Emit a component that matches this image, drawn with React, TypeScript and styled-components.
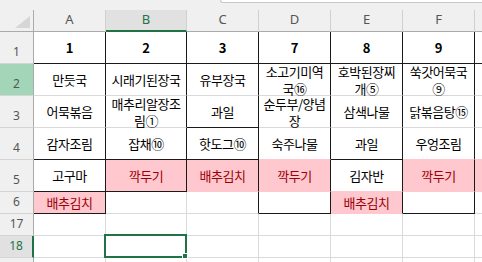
import React from "react";
import styled, { createGlobalStyle } from "styled-components";

const GREEN = "#217346";
const GRID = "#dadada";
const INK = "#1a1a1a";
const PINK_FILL = "#ffc7ce";
const PINK_TEXT = "#9c0006";

const GlobalStyle = createGlobalStyle`
  html, body {
    margin: 0;
    padding: 0;
    background: #f0f0f0;
    overflow: hidden;
  }
  body {
    font-family: "Noto Sans CJK KR", "Noto Sans", sans-serif;
  }
`;

const Window = styled.div`
  width: 482px;
  height: 262px;
  overflow: hidden;
  background: #f0f0f0;
`;

const TopStrip = styled.div`
  height: 10px;
  display: flex;
  align-items: flex-start;
`;

const FormulaEdge = styled.div`
  margin-left: 220px;
  flex: 1;
  height: 2px;
  background: #fff;
  border-left: 1px solid #c8c8c8;
  border-bottom: 1px solid #c8c8c8;
  border-bottom-left-radius: 4px;
`;

const Sheet = styled.div`
  display: grid;
  grid-template-columns: 34px 72px 81px 72px 72px 72px 72px 72px;
  grid-template-rows: 22px 32px 32px 32px 32px 32px 22px 22px 22px 22px;
  background: #fff;
`;

const Corner = styled.div`
  box-sizing: border-box;
  display: flex;
  align-items: flex-end;
  justify-content: flex-end;
  padding: 0 3px 3px 0;
  background: #f0f0f0;
  border-right: 1px solid #ababab;
  border-bottom: 1px solid #ababab;
`;

const CornerTriangle = styled.span`
  width: 15px;
  height: 12px;
  background: #d6d6d6;
  clip-path: polygon(100% 0, 100% 100%, 0 100%);
`;

const ColHead = styled.div<{ $selected?: boolean }>`
  box-sizing: border-box;
  display: flex;
  align-items: center;
  justify-content: center;
  padding-bottom: ${(p) => (p.$selected ? 3 : 4)}px;
  font-family: "Noto Sans", sans-serif;
  font-size: 13px;
  line-height: 18px;
  color: ${(p) => (p.$selected ? GREEN : "#555")};
  background: ${(p) => (p.$selected ? "#e1e1e1" : "#f0f0f0")};
  border-right: 1px solid #d0d0d0;
  border-bottom: ${(p) => (p.$selected ? `2px solid ${GREEN}` : "1px solid #ababab")};
`;

type HeadState = "plain" | "marked" | "selected";

const RowHead = styled.div<{ $state: HeadState }>`
  box-sizing: border-box;
  display: flex;
  align-items: flex-end;
  justify-content: center;
  padding-bottom: 3px;
  font-family: "Noto Sans", sans-serif;
  font-size: 12px;
  line-height: 16px;
  color: ${(p) => (p.$state === "selected" ? GREEN : "#555")};
  background: ${(p) =>
    p.$state === "marked" ? "#a3d6b8" : p.$state === "selected" ? "#e1e1e1" : "#f0f0f0"};
  border-right: ${(p) => (p.$state === "selected" ? `2px solid ${GREEN}` : "1px solid #ababab")};
  border-bottom: 1px solid #d4d4d4;
`;

type Edge = "grid" | "ink" | "fill";

const edgeColor = (e: Edge) => (e === "ink" ? INK : e === "fill" ? PINK_FILL : GRID);

const Cell = styled.div<{ $right: Edge; $bottom: Edge; $pink?: boolean; $bold?: boolean }>`
  position: relative;
  box-sizing: border-box;
  display: flex;
  align-items: center;
  justify-content: center;
  padding: 0 3px;
  text-align: center;
  word-break: break-all;
  font-size: 13px;
  letter-spacing: ${(p) => (p.$bold ? "0" : "-0.5px")};
  line-height: 17px;
  font-weight: ${(p) => (p.$bold ? 700 : 400)};
  color: ${(p) => (p.$pink ? PINK_TEXT : "#000")};
  background: ${(p) => (p.$pink ? PINK_FILL : "#fff")};
  border-right: 1px solid ${(p) => edgeColor(p.$right)};
  border-bottom: 1px solid ${(p) => edgeColor(p.$bottom)};
`;

const Selection = styled.div`
  position: absolute;
  top: -2px;
  left: -2px;
  right: -1px;
  bottom: -1px;
  border: 2px solid ${GREEN};
  pointer-events: none;
  z-index: 2;
`;

const FillHandle = styled.span`
  position: absolute;
  right: -3px;
  bottom: -3px;
  width: 4px;
  height: 4px;
  background: ${GREEN};
  border: 1px solid #fff;
`;

interface RowData {
  label: string;
  values: string[];
  bold?: boolean;
  state?: HeadState;
}

// column G only peeks in at the right edge, so its header and values stay blank
const COLS = ["A", "B", "C", "D", "E", "F", "G"];
const COL_LABELS = ["A", "B", "C", "D", "E", "F", ""];

const ROWS: RowData[] = [
  { label: "1", values: ["1", "2", "3", "7", "8", "9", ""], bold: true },
  {
    label: "2",
    state: "marked",
    values: ["만듯국", "시래기된장국", "유부장국", "소고기미역국⑯", "호박된장찌개⑤", "쑥갓어묵국⑨", ""],
  },
  { label: "3", values: ["어묵볶음", "매추리알장조림①", "과일", "순두부/양념장", "삼색나물", "닭볶음탕⑮", ""] },
  { label: "4", values: ["감자조림", "잡채⑩", "핫도그⑩", "숙주나물", "과일", "우엉조림", ""] },
  { label: "5", values: ["고구마", "깍두기", "배추김치", "깍두기", "김자반", "깍두기", ""] },
  { label: "6", values: ["배추김치", "", "", "", "배추김치", "", ""] },
  { label: "17", values: [] },
  { label: "18", values: [], state: "selected" },
  // last row is cut by the window bottom, its number is not visible
  { label: "", values: [] },
];

// "배추김치"/"깍두기" cells carry the light red highlight
const PINK = new Set(["B5", "C5", "D5", "F5", "G5", "A6", "E6"]);

// thick day-block outlines
const INK_RIGHT = new Set<string>();
for (let r = 1; r <= 6; r++) {
  ["A", "C", "D", "E", "F"].forEach((c) => INK_RIGHT.add(c + r));
  if (r <= 5) INK_RIGHT.add("B" + r);
}
const INK_BOTTOM = new Set([
  "A1", "B1", "C1", "D1", "E1", "F1", "G1",
  "C3",
  "A4", "B4", "C4", "E4",
  "A5", "B5",
  "A6", "D6", "F6",
]);

const SELECTED = "B18";

const pinkAt = (c: number, label: string) => c < COLS.length && PINK.has(COLS[c] + label);

const App: React.FC = () => {
  return (
    <>
      <GlobalStyle />
      <Window>
        <TopStrip>
          <FormulaEdge />
        </TopStrip>
        <Sheet>
          <Corner>
            <CornerTriangle />
          </Corner>
          {COLS.map((c, ci) => (
            <ColHead key={c} $selected={c === "B"}>
              {COL_LABELS[ci]}
            </ColHead>
          ))}

          {ROWS.map((row, ri) => {
            const below = ROWS[ri + 1]?.label ?? "";
            return (
              <React.Fragment key={ri}>
                <RowHead $state={row.state ?? "plain"}>{row.label}</RowHead>
                {COLS.map((c, ci) => {
                  const id = c + row.label;
                  const self = row.label !== "" && PINK.has(id);
                  const right: Edge = INK_RIGHT.has(id)
                    ? "ink"
                    : self || (row.label !== "" && pinkAt(ci + 1, row.label))
                    ? "fill"
                    : "grid";
                  const bottom: Edge = INK_BOTTOM.has(id)
                    ? "ink"
                    : self || (below !== "" && PINK.has(c + below))
                    ? "fill"
                    : "grid";
                  return (
                    <Cell key={c} $right={right} $bottom={bottom} $pink={self} $bold={row.bold}>
                      {row.values[ci] ?? ""}
                      {id === SELECTED && (
                        <Selection>
                          <FillHandle />
                        </Selection>
                      )}
                    </Cell>
                  );
                })}
              </React.Fragment>
            );
          })}
        </Sheet>
      </Window>
    </>
  );
};

export default App;
